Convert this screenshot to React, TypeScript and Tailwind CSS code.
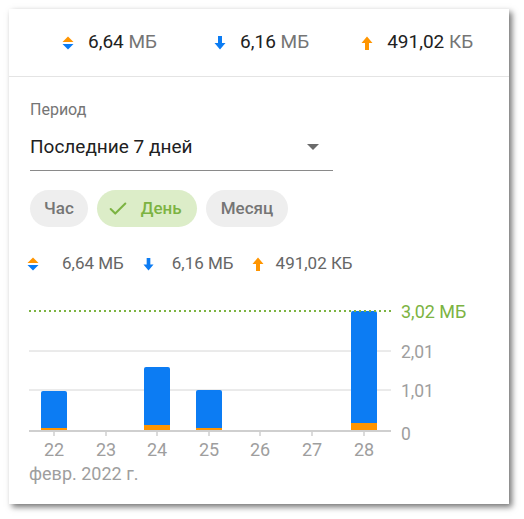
import { Check } from 'lucide-react';

const BLUE = '#0c7cf3';
const ORANGE = '#ff9500';

const BothIcon = ({ className }: { className?: string }) => (
  <svg viewBox="0 0 12 14" className={className}>
    <polygon points="6,0.5 11.5,6 0.5,6" fill={ORANGE} />
    <polygon points="0.5,8 11.5,8 6,13.5" fill={BLUE} />
  </svg>
);

const DownIcon = ({ className }: { className?: string }) => (
  <svg viewBox="0 0 12 14" className={className}>
    <polygon points="4,0 8,0 8,7 11.5,7 6,13.5 0.5,7 4,7" fill={BLUE} />
  </svg>
);

const UpIcon = ({ className }: { className?: string }) => (
  <svg viewBox="0 0 12 14" className={className}>
    <polygon points="6,0.5 11.5,7 8,7 8,14 4,14 4,7 0.5,7" fill={ORANGE} />
  </svg>
);

const BARS = [
  { x: 12, top: 91, orange: 3 },
  { x: 115, top: 67, orange: 6 },
  { x: 167, top: 90, orange: 3 },
  { x: 322, top: 11, orange: 8 },
];

const TICKS = [
  { x: 25, label: '22' },
  { x: 77, label: '23' },
  { x: 128, label: '24' },
  { x: 180, label: '25' },
  { x: 231, label: '26' },
  { x: 283, label: '27' },
  { x: 335, label: '28' },
];

function Chart() {
  const base = 131;
  return (
    <svg width="480" height="190" className="block" style={{ fontFamily: 'Roboto, sans-serif' }}>
      <line x1="0" x2="362" y1="51" y2="51" stroke="#d6d6d6" strokeWidth="1" />
      <line x1="0" x2="362" y1="90" y2="90" stroke="#d6d6d6" strokeWidth="1" />
      {BARS.map((b) => (
        <g key={b.x}>
          <path
            d={`M${b.x} ${base} V${b.top + 2} Q${b.x} ${b.top} ${b.x + 2} ${b.top} H${b.x + 24} Q${b.x + 26} ${b.top} ${b.x + 26} ${b.top + 2} V${base} Z`}
            fill={BLUE}
          />
          <rect x={b.x} y={base - b.orange} width="26" height={b.orange} fill={ORANGE} />
        </g>
      ))}
      <line x1="0" x2="362" y1="11" y2="11" stroke="#7cb342" strokeWidth="2" strokeDasharray="2 3" />
      <line x1="0" x2="362" y1={base} y2={base} stroke="#cfcfcf" strokeWidth="2" />
      {TICKS.map((t) => (
        <g key={t.label}>
          <line x1={t.x} x2={t.x} y1={base} y2={base + 5} stroke="#cfcfcf" strokeWidth="1.5" />
          <text x={t.x} y={155.5} textAnchor="middle" fontSize="18" fill="#9e9e9e">
            {t.label}
          </text>
        </g>
      ))}
      <text x="372" y="17.5" fontSize="18" fill="#7cb342">3,02 МБ</text>
      <text x="372" y="57.5" fontSize="17.5" fill="#9e9e9e">2,01</text>
      <text x="372" y="96.5" fontSize="17.5" fill="#9e9e9e">1,01</text>
      <text x="372" y="139.5" fontSize="17.5" fill="#9e9e9e">0</text>
      <text x="0" y="180" fontSize="18" fill="#9e9e9e">февр. 2022 г.</text>
    </svg>
  );
}

export default function App() {
  return (
    <div className="w-[524px] h-[519px] bg-white p-[9px]" style={{ fontFamily: 'Roboto, sans-serif' }}>
      <div className="w-[500px] h-[495px] bg-white shadow-[3px_3px_6px_rgba(0,0,0,0.55)] flex flex-col">
        <header className="h-[68px] flex items-center pl-[53px] border-b border-[#e4e4e4] text-[19px]">
          <div className="flex items-center gap-[14px]">
            <BothIcon className="w-[12px] h-[14px]" />
            <p className="text-[#212121]">
              6,64 <span className="text-[#757575]">МБ</span>
            </p>
          </div>
          <div className="flex items-center gap-[14px] ml-[57px]">
            <DownIcon className="w-[12px] h-[14px]" />
            <p className="text-[#212121]">
              6,16 <span className="text-[#757575]">МБ</span>
            </p>
          </div>
          <div className="flex items-center gap-[14px] ml-[52px]">
            <UpIcon className="w-[12px] h-[14px]" />
            <p className="text-[#212121]">
              491,02 <span className="text-[#757575]">КБ</span>
            </p>
          </div>
        </header>

        <div className="pl-[21px] pt-[23px]">
          <p className="text-[16px] text-[#757575] leading-[20px]">Период</p>
          <div className="w-[303px] mt-[15px] h-[36px] border-b-[1.5px] border-[#8a8a8a] flex items-start justify-between pr-[14px]">
            <span className="text-[19px] text-[#212121] leading-[24px]">Последние 7 дней</span>
            <span className="mt-[9px] w-0 h-0 border-l-[6px] border-r-[6px] border-t-[6px] border-l-transparent border-r-transparent border-t-[#6b6b6b]" />
          </div>

          <div className="flex gap-[9px] mt-[19px]">
            <div className="h-[37px] px-[14px] rounded-full bg-[#eeeeee] flex items-center text-[17px] font-medium text-[#757575]">
              Час
            </div>
            <div className="h-[37px] pl-[10px] pr-[15px] rounded-full bg-[#dcedc8] flex items-center gap-[12px] text-[17px] font-medium text-[#7cb342]">
              <Check className="w-[22px] h-[22px]" strokeWidth={2.2} />
              День
            </div>
            <div className="h-[37px] px-[15px] rounded-full bg-[#eeeeee] flex items-center text-[17px] font-medium text-[#757575]">
              Месяц
            </div>
          </div>

          <div className="flex items-center mt-[27px] -ml-[3px] h-[20px] text-[17px] text-[#666666]">
            <BothIcon className="w-[12px] h-[14px]" />
            <span className="ml-[23px]">6,64 МБ</span>
            <DownIcon className="w-[11px] h-[13px] ml-[19px]" />
            <span className="ml-[18px]">6,16 МБ</span>
            <UpIcon className="w-[12px] h-[14px] ml-[18px]" />
            <span className="ml-[12px]">491,02 КБ</span>
          </div>

          <div className="mt-[26px] -ml-[1px]">
            <Chart />
          </div>
        </div>
      </div>
    </div>
  );
}
